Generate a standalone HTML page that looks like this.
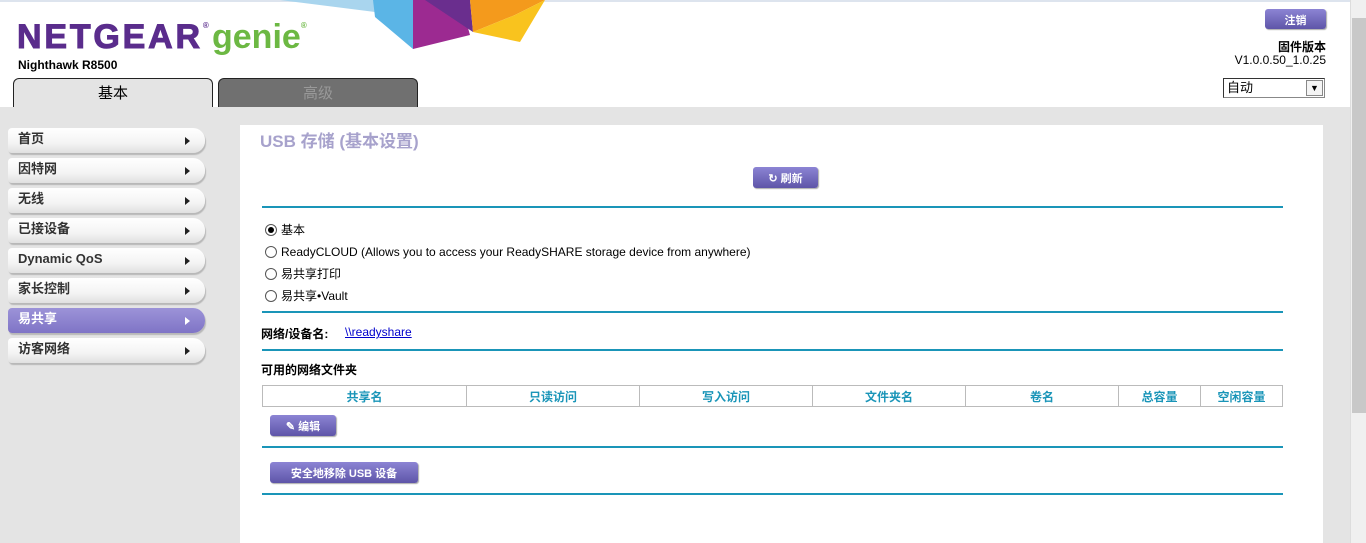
<!DOCTYPE html>
<html><head><meta charset="utf-8"><style>
*{margin:0;padding:0;box-sizing:border-box}
body{width:1366px;height:543px;overflow:hidden;background:#fff;font-family:"Liberation Sans","Noto Sans CJK SC",sans-serif;font-size:12px;color:#000;position:relative}
.abs{position:absolute}
.gray{left:0;top:107px;width:1350px;height:436px;background:#e4e4e4}
.sb{left:1350px;top:0;width:16px;height:543px;background:#f0f0f0;border-left:1px solid #ddd}
.nav{left:8px;width:197px;height:25px;line-height:22px;background:linear-gradient(#fff,#f4f4f4 60%,#e0e0e0);border-radius:4px 12px 12px 4px;box-shadow:1px 2px 1px #b8b8b8;font-weight:bold;font-size:13px;color:#333;padding:0 0 0 10px}
.nav:after{content:"";position:absolute;left:177px;top:9px;border-left:5px solid #222;border-top:4px solid transparent;border-bottom:4px solid transparent}
.nav.act{background:linear-gradient(#9c93d8,#7f74c6);color:#fff}
.nav.act:after{border-left-color:#fff}
.line{left:262px;width:1021px;height:2px;background:#1a95b8}
.btn{background:linear-gradient(#8c84d4,#5e55a8);color:#fff;font-weight:bold;font-size:11px;border-radius:3px;text-align:center;box-shadow:1px 1px 1px #aaa}
.radio{width:12px;height:12px;border:1px solid #555;border-radius:50%;display:inline-block;vertical-align:-2px;margin-right:4px;position:relative;background:#fff}
.radio.on:after{content:"";position:absolute;left:2px;top:2px;width:6px;height:6px;border-radius:50%;background:#000}
td{border:1px solid #bbb;color:#1a95b8;font-weight:bold;text-align:center;height:21px;font-size:12px}
</style></head><body>
<div class="abs" style="left:0;top:0;width:1350px;height:2px;background:#dde4ee"></div>
<svg class="abs" style="left:280px;top:0" width="270" height="52"><polygon points="0,0 150,0 135,17" fill="#a9d5ee"/><polygon points="93,0 180,0 133,49 95,17" fill="#5bb5e6"/><polygon points="133,0 180,0 190,35 133,49" fill="#9c2a91"/><polygon points="145,0 190,0 193,32" fill="#6a2e8e"/><polygon points="190,0 265,0 235,15 193,32" fill="#f49a1c"/><polygon points="265,0 240,42 193,32 235,15" fill="#f9c31e"/></svg>
<div class="abs" style="left:17px;top:6px;font-size:34px;line-height:40px;font-weight:bold;color:#5a2c8c;letter-spacing:2.8px;-webkit-text-stroke:1px #5a2c8c">NETGEAR<sup style="font-size:8px;vertical-align:20px;letter-spacing:0;-webkit-text-stroke:0">®</sup></div>
<div class="abs" style="left:212px;top:6px;font-size:34px;line-height:40px;font-weight:bold;color:#6cb843">genie<sup style="font-size:8px;vertical-align:20px">®</sup></div>
<div class="abs" style="left:18px;top:58px;font-weight:bold;font-size:12px">Nighthawk R8500</div>
<div class="abs" style="left:13px;top:78px;width:200px;height:32px;background:#e4e4e4;border:1px solid #222;border-bottom:none;border-radius:6px 6px 0 0;text-align:center;font-size:15px;padding-top:3px">基本</div>
<div class="abs" style="left:218px;top:78px;width:200px;height:30px;background:#707070;border:1px solid #222;border-bottom:none;border-radius:6px 6px 0 0;text-align:center;font-size:15px;color:#999;padding-top:3px">高级</div>
<div class="abs btn" style="left:1265px;top:9px;width:61px;height:20px;padding-top:3px">注销</div>
<div class="abs" style="right:40px;top:38px;font-weight:bold;font-size:12px">固件版本</div>
<div class="abs" style="right:40px;top:53px;font-size:12px">V1.0.0.50_1.0.25</div>
<div class="abs" style="left:1223px;top:78px;width:102px;height:20px;border:1px solid #888;border-top-color:#333;border-left-color:#333;background:#fff;font-size:13px;line-height:16px;padding:1px 3px">自动<span style="position:absolute;right:1px;top:1px;width:17px;height:16px;border:1px solid #888;background:#f4f4f4;font-size:9px;line-height:14px;text-align:center">▼</span></div>
<div class="abs gray"></div>
<div class="abs sb"><div style="margin:18px 0 0 1px;width:14px;height:395px;background:#c8c8c8"></div></div>
<div class="abs nav" style="top:128px">首页</div>
<div class="abs nav" style="top:158px">因特网</div>
<div class="abs nav" style="top:188px">无线</div>
<div class="abs nav" style="top:218px">已接设备</div>
<div class="abs nav" style="top:248px">Dynamic QoS</div>
<div class="abs nav" style="top:278px">家长控制</div>
<div class="abs nav act" style="top:308px">易共享</div>
<div class="abs nav" style="top:338px">访客网络</div>
<div class="abs" style="left:240px;top:125px;width:1083px;height:418px;background:#fff"></div>
<div class="abs" style="left:260px;top:127px;font-size:17px;font-weight:bold;color:#a7a2cc">USB 存储 (基本设置)</div>
<div class="abs btn" style="left:753px;top:167px;width:65px;height:21px;padding-top:3px">↻ 刷新</div>
<div class="abs line" style="top:206px"></div>
<div class="abs" style="left:265px;top:219px;font-size:12px;line-height:22px">
<div><span class="radio on"></span>基本</div>
<div><span class="radio"></span>ReadyCLOUD (Allows you to access your ReadySHARE storage device from anywhere)</div>
<div><span class="radio"></span>易共享打印</div>
<div><span class="radio"></span>易共享•Vault</div></div>
<div class="abs line" style="top:311px"></div>
<div class="abs" style="left:261px;top:325px;font-weight:bold">网络/设备名:</div>
<div class="abs" style="left:345px;top:325px;color:#00c;text-decoration:underline">\\readyshare</div>
<div class="abs line" style="top:349px"></div>
<div class="abs" style="left:261px;top:361px;font-weight:bold">可用的网络文件夹</div>
<table class="abs" style="left:262px;top:385px;width:1021px;border-collapse:collapse"><tr><td style="width:204px">共享名</td><td style="width:173px">只读访问</td><td style="width:173px">写入访问</td><td style="width:153px">文件夹名</td><td style="width:153px">卷名</td><td style="width:82px">总容量</td><td>空闲容量</td></tr></table>
<div class="abs btn" style="left:270px;top:415px;width:66px;height:21px;padding-top:3px">✎ 编辑</div>
<div class="abs line" style="top:446px"></div>
<div class="abs btn" style="left:270px;top:462px;width:148px;height:21px;padding-top:3px">安全地移除 USB 设备</div>
<div class="abs line" style="top:493px"></div>
</body></html>
